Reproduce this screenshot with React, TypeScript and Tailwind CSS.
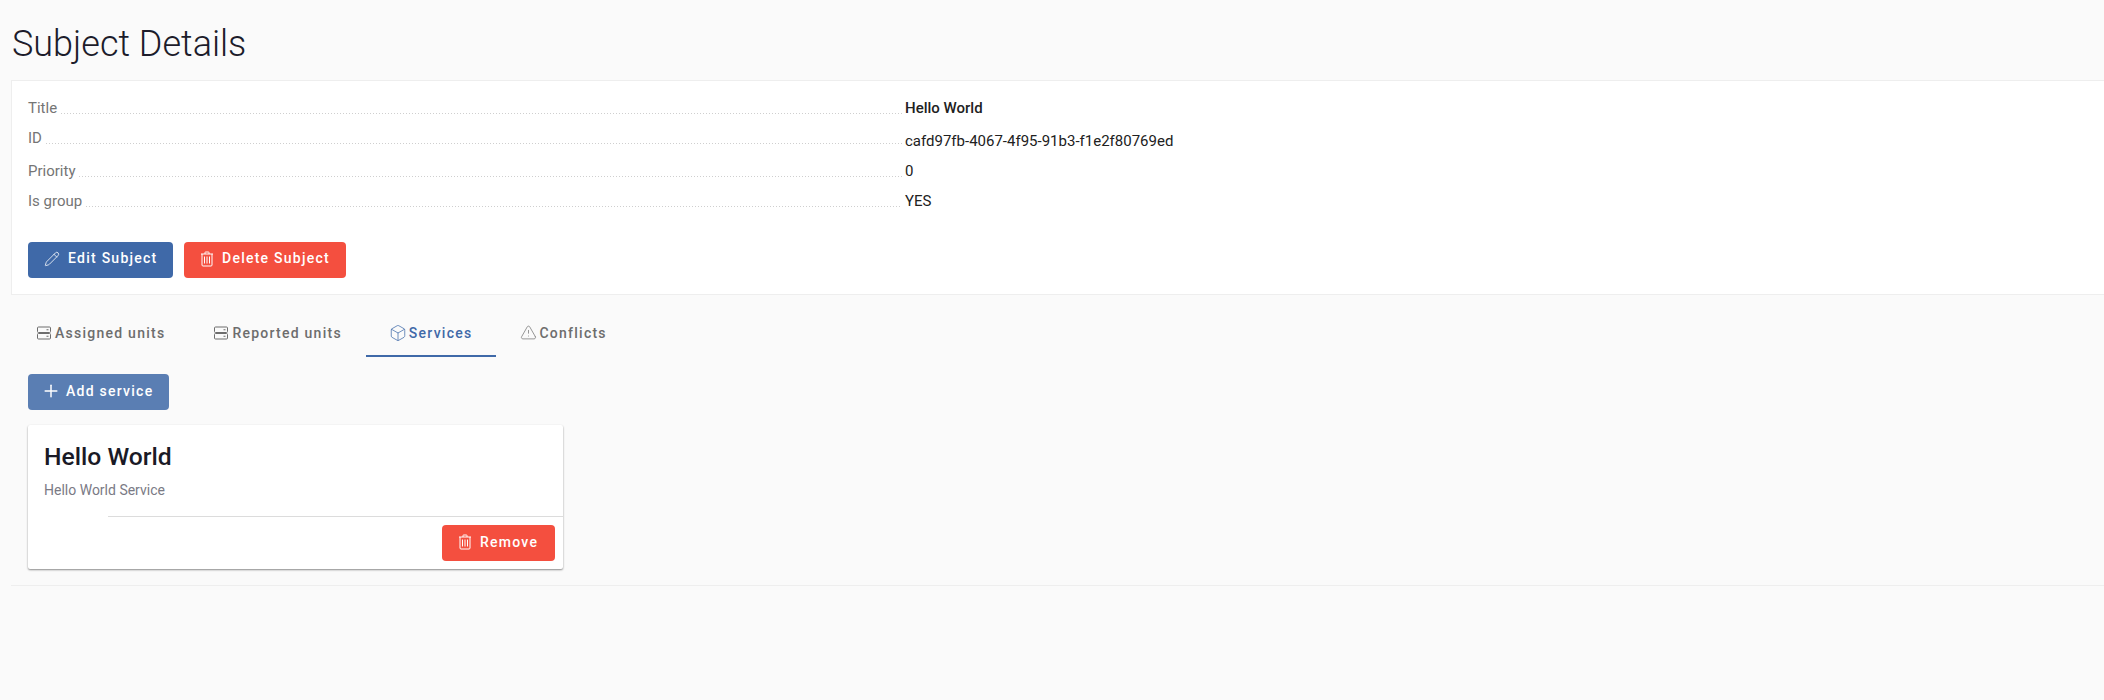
import { Pencil, Box, TriangleAlert, Plus } from "lucide-react";

const rows = [
  { label: "Title", value: "Hello World", bold: true, height: "h-[30px]", valueClass: "" },
  { label: "ID", value: "cafd97fb-4067-4f95-91b3-f1e2f80769ed", bold: false, height: "h-[33px]", valueClass: "pt-[3px]" },
  { label: "Priority", value: "0", bold: false, height: "h-[30px]", valueClass: "" },
  { label: "Is group", value: "YES", bold: false, height: "h-[30px]", valueClass: "" },
];

function TrashIcon() {
  return (
    <svg width="14" height="16" viewBox="0 0 14 16" fill="none" stroke="currentColor" strokeWidth="1" className="mb-[2px] mr-[8px] shrink-0">
      <path d="M1 3h12M5 3V1.5a.5.5 0 0 1 .5-.5h3a.5.5 0 0 1 .5.5V3" />
      <path d="M2 3V14a1 1 0 0 0 1 1h8a1 1 0 0 0 1-1V3" />
      <path d="M4.5 5.5v7M7 5.5v7M9.5 5.5v7" />
    </svg>
  );
}

function ServerIcon() {
  return (
    <svg width="16" height="16" viewBox="0 0 16 16" fill="none" stroke="currentColor" strokeWidth="1" className="mb-[2px] mr-[3px] shrink-0">
      <rect x="1.5" y="2" width="13" height="5.5" rx="1" />
      <rect x="1.5" y="8.5" width="13" height="5.5" rx="1" />
      <path d="M10.5 4.75h2M10.5 11.25h2" />
    </svg>
  );
}

const tabs = [
  { label: "Assigned units", icon: <ServerIcon />, active: false },
  { label: "Reported units", icon: <ServerIcon />, active: false },
  { label: "Services", icon: <Box size={18} strokeWidth={1} className="-ml-[1px] mb-[2px] mr-[2px]" />, active: true },
  { label: "Conflicts", icon: <TriangleAlert size={17} strokeWidth={1} className="mb-[2px] mr-[2px]" />, active: false },
];

export default function App() {
  return (
    <div className="min-h-[700px] w-full overflow-hidden bg-[#fafafa] font-['Roboto',sans-serif] text-[14px] text-[#212121]">
      <div className="pl-[11px]">
        <h1 className="h-[80px] pl-px pt-[19px] text-[36px] leading-[50px] font-light text-[#1c1c2b]">Subject Details</h1>

        <section className="h-[215px] border border-r-0 border-[#eeeeee] bg-white pl-4 pt-[12px]">
          <div className="flex flex-col">
            {rows.map((row) => (
              <div key={row.label} className={`flex ${row.height}`}>
                <div className="flex h-[30px] w-[874px] items-start">
                  <span className="pt-[5px] text-[15px] leading-[20px] text-[#757575]">{row.label}</span>
                  <span className="ml-1 mt-[20px] h-px flex-1 bg-[repeating-linear-gradient(90deg,#cfcfcf_0,#cfcfcf_1px,transparent_1px,transparent_3px)]" />
                </div>
                <div className={`pl-[3px] ${row.valueClass}`}>
                  <span className={`block pt-[5px] text-[15px] leading-[20px] ${row.bold ? "font-medium" : ""}`}>{row.value}</span>
                </div>
              </div>
            ))}
          </div>
          <div className="mt-[26px] flex gap-[11px]">
            <button className="flex h-9 w-[145px] items-center rounded bg-[#3f69a8] pl-4 font-medium tracking-[1.25px] text-white">
              <Pencil size={16} strokeWidth={1.2} className="mb-[2px] mr-[8px]" />
              <span className="pb-[3px]">Edit Subject</span>
            </button>
            <button className="flex h-9 w-[162px] items-center rounded bg-[#f44f3f] pl-4 font-medium tracking-[1.25px] text-white">
              <TrashIcon />
              <span className="pb-[3px]">Delete Subject</span>
            </button>
          </div>
        </section>

        <div className="pb-[16px] pl-[17px] pt-[16px]">
          <nav className="-ml-[16px] flex h-[46px]">
            {tabs.map((tab) => (
              <div
                key={tab.label}
                className={`flex items-center border-b-2 px-6 pt-[1px] text-[14px] font-medium tracking-[1.25px] ${
                  tab.active ? "border-[#3f69a8] text-[#3f69a8]" : "border-transparent text-[#6d6d6d]"
                }`}
              >
                {tab.icon}
                {tab.label}
              </div>
            ))}
          </nav>
          <button className="mt-[17px] flex h-9 w-[141px] items-center rounded bg-[#5a7eb3] pl-[13px] font-medium tracking-[1.25px] text-white">
            <Plus size={20} strokeWidth={1.8} className="mb-[2px] mr-[5px]" />
            <span className="pb-[2px]">Add service</span>
          </button>
          <div className="mt-[15px] flex h-[144px] w-[535px] flex-col rounded-[2px] bg-white shadow-[0_1px_2px_rgba(0,0,0,0.45)]">
            <div className="h-[91px] px-4 pt-[16px]">
              <h2 className="text-[24.7px] leading-[32px] font-medium text-[#1a1a26]">Hello World</h2>
              <p className="mt-[7px] leading-[20px] text-[#7a7a85]">Hello World Service</p>
            </div>
            <div className="ml-[80px] flex flex-1 justify-end border-t border-[#dcdcdc] pr-2 pt-2">
              <button className="flex h-9 w-[113px] items-center rounded bg-[#f44f3f] pl-4 font-medium tracking-[1.25px] text-white">
                <TrashIcon />
                <span className="pb-[2px]">Remove</span>
              </button>
            </div>
          </div>
        </div>

        <div className="h-px bg-[#eeeeee]" />
      </div>
    </div>
  );
}
